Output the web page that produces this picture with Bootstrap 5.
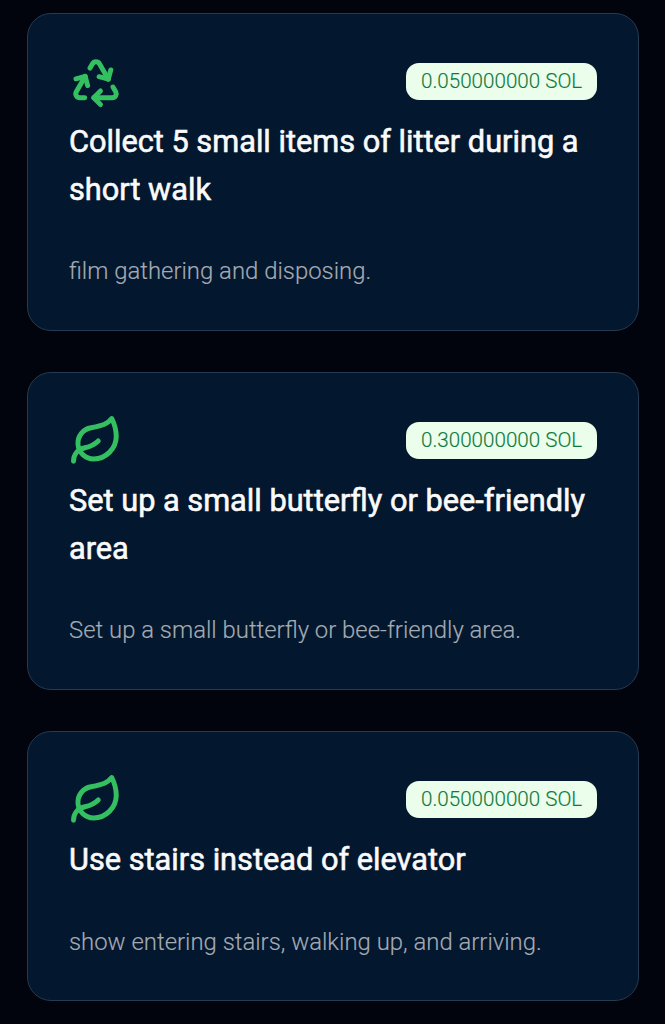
<!DOCTYPE html>
<html lang="en">
<head>
<meta charset="utf-8">
<meta name="viewport" content="width=device-width, initial-scale=1">
<title>Eco tasks</title>
<link href="https://cdn.jsdelivr.net/npm/bootstrap@5.3.0/dist/css/bootstrap.min.css" rel="stylesheet">
<style>
body{background:#01030d;font-family:Roboto,sans-serif;overflow:hidden}
.task-list{padding:13px 26px 0 27px;gap:41px}
.task-card{background:#03172e;border:1px solid #263a50;border-radius:24px;padding:41px}
.task-card:last-child{padding-bottom:40px}
.task-head{height:53px}
.task-icon{width:54px;height:54px;color:#34c060;stroke-width:2.2}
.reward{background:#ebfeeb;color:#107a3e;border-radius:13px;font-size:20.6px;font-weight:300;line-height:36px;height:37px;padding:0 15px;width:191px;white-space:nowrap;-webkit-text-stroke:.15px}
.task-title{color:#fafafa;font-size:30.72px;font-weight:400;-webkit-text-stroke:.6px;line-height:47.5px;margin:10px 0 0}
.task-text{color:#a5abb3;font-size:23.9px;font-weight:300;-webkit-text-stroke:.15px;line-height:36px;margin:40px 0 0}
</style>
</head>
<body>
<svg class="d-none">
<symbol id="recycle" viewBox="0 0 24 24" fill="none" stroke="currentColor" stroke-linecap="round" stroke-linejoin="round"><path d="M7 19H4.815a1.83 1.83 0 0 1-1.57-.881 1.785 1.785 0 0 1-.004-1.784L7.196 9.5"/><path d="M11 19h8.203a1.83 1.83 0 0 0 1.556-.89 1.784 1.784 0 0 0 0-1.775l-1.226-2.12"/><path d="m14 16-3 3 3 3"/><path d="M8.293 13.596 7.196 9.5 3.1 10.598"/><path d="m9.344 5.811 1.093-1.892A1.83 1.83 0 0 1 11.985 3a1.784 1.784 0 0 1 1.546.888l3.943 6.843"/><path d="m13.378 9.633 4.096 1.098 1.097-4.096"/></symbol>
<symbol id="leaf" viewBox="0 0 24 24" fill="none" stroke="currentColor" stroke-linecap="round" stroke-linejoin="round"><path d="M11 20A7 7 0 0 1 9.8 6.1C15.5 5 17 4.48 19 2c1 2 2 4.18 2 8 0 5.5-4.78 10-10 10Z"/><path d="M2 21c0-3 1.85-5.36 5.08-6C9.5 14.52 12 13 13 12"/></symbol>
</svg>
<main class="task-list d-flex flex-column">
<article class="task-card">
<div class="task-head d-flex justify-content-between align-items-center"><svg class="task-icon"><use href="#recycle"/></svg><span class="reward">0.050000000 SOL</span></div>
<h2 class="task-title">Collect 5 small items of litter during a short walk</h2>
<p class="task-text">film gathering and disposing.</p>
</article>
<article class="task-card">
<div class="task-head d-flex justify-content-between align-items-center"><svg class="task-icon"><use href="#leaf"/></svg><span class="reward">0.300000000 SOL</span></div>
<h2 class="task-title">Set up a small butterfly or bee-friendly area</h2>
<p class="task-text">Set up a small butterfly or bee-friendly area.</p>
</article>
<article class="task-card">
<div class="task-head d-flex justify-content-between align-items-center"><svg class="task-icon"><use href="#leaf"/></svg><span class="reward">0.050000000 SOL</span></div>
<h2 class="task-title">Use stairs instead of elevator</h2>
<p class="task-text">show entering stairs, walking up, and arriving.</p>
</article>
</main>
<script src="https://cdn.jsdelivr.net/npm/bootstrap@5.3.0/dist/js/bootstrap.bundle.min.js"></script>
</body>
</html>
